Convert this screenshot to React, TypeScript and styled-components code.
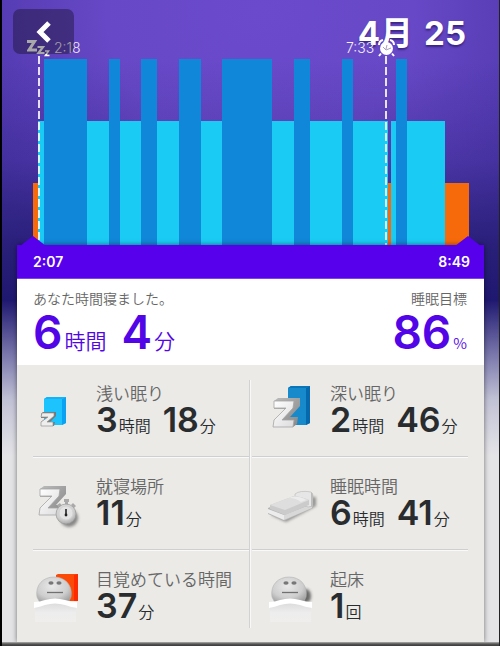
import React from "react";
import styled, { createGlobalStyle } from "styled-components";

const DIGITS = 'Inter, "Noto Sans CJK JP", sans-serif';
const KANJI = '"Noto Sans CJK JP", sans-serif';

const GlobalStyle = createGlobalStyle`
  *, *::before, *::after { box-sizing: border-box; }
  body { margin: 0; font-family: ${DIGITS}; background: #000; }
  h1, h2, p, dl, dt, dd { margin: 0; }
`;

const Page = styled.main`
  display: flex;
  flex-direction: column;
  min-height: 100vh;
  border-left: 2px solid #000;
  border-right: 1px solid #222;
  padding: 0 15px;
  background:
    linear-gradient(to bottom, rgba(26, 22, 100, 0) 60px, rgba(26, 22, 100, 0.2) 160px, rgba(26, 22, 100, 0.7) 250px, #1f1870 300px, #7a78ac 355px, #c2c2d6 400px, #e4e4e7 455px),
    radial-gradient(ellipse 440px 400px at 52% 10px, #6b4bcc 0%, #6748c6 35%, #4a34a8 75%);
`;

const Header = styled.header`
  display: flex;
  justify-content: space-between;
  align-items: flex-start;
  height: 59px;
  padding: 9px 18px 0 0;
`;

const BackButton = styled.button`
  position: relative;
  z-index: 2;
  display: flex;
  align-items: center;
  justify-content: center;
  width: 61px;
  height: 45px;
  margin-left: -4px;
  padding: 0;
  border: 0;
  border-radius: 7px;
  background: rgba(10, 6, 10, 0.35);
  cursor: pointer;
`;

const Title = styled.h1`
  display: flex;
  align-items: baseline;
  gap: 11px;
  font-size: 33px;
  line-height: 48px;
  font-weight: 700;
  color: #fff;
  text-shadow: 0 2px 2px rgba(30, 15, 90, 0.6);
`;

const Chart = styled.section`
  position: relative;
  height: 186px;
  margin: 0 15px 0 16px;
`;

const Bars = styled.svg`
  display: block;
  width: 100%;
  height: 100%;
`;

const Marker = styled.div<{ $at: number }>`
  position: absolute;
  left: ${(p) => p.$at}%;
  top: -3px;
  bottom: 0;
  width: 2px;
  background: repeating-linear-gradient(to bottom, rgba(255, 255, 255, 0.85) 0 8px, transparent 8px 11px);
`;

const MarkerLabel = styled.div<{ $side: "left" | "right" }>`
  position: absolute;
  bottom: 100%;
  ${(p) => (p.$side === "right" ? "left: -11px;" : "right: -8px;")}
  display: flex;
  align-items: center;
  gap: 4px;
  height: 18px;
  margin-bottom: -1px;
  font-size: 14px;
  line-height: 18px;
  font-weight: 300;
  color: #f3effc;
`;

const Card = styled.section`
  z-index: 1;
  display: flex;
  flex: 1;
  flex-direction: column;
  background: #ebeae7;
  box-shadow: 0 0 5px rgba(0, 0, 0, 0.5);
`;

const TimeBar = styled.div`
  position: relative;
  display: flex;
  justify-content: space-between;
  height: 34px;
  padding: 0 14px 0 16px;
  border-bottom: 1px solid #7a42f0;
  background: #5600eb;
  font-size: 14px;
  line-height: 33px;
  font-weight: 600;
  color: #fff;
`;

const Notch = styled.span<{ $side: "left" | "right" }>`
  position: absolute;
  bottom: 100%;
  ${(p) => (p.$side === "left" ? "left: 3px;" : "right: 3px;")}
  width: 26px;
  height: 10px;
  margin-bottom: -1px;
  background: #5600eb;
  clip-path: polygon(50% 0, 100% 100%, 0 100%);
`;

const Summary = styled.div`
  display: flex;
  justify-content: space-between;
  height: 86px;
  padding: 9px 17px 0 16px;
  background: #fff;
`;

const SummaryItem = styled.div<{ $end?: boolean }>`
  display: flex;
  flex-direction: column;
  align-items: ${(p) => (p.$end ? "flex-end" : "flex-start")};
`;

const SummaryLabel = styled.h2`
  font: 350 14px/20px ${KANJI};
  color: #666;
`;

const SummaryValue = styled.p`
  display: flex;
  align-items: baseline;
  gap: 2px;
  height: 48px;
  line-height: 48px;
  color: #5205e6;
`;

const SummaryNumber = styled.span`
  font-size: 46px;
  font-weight: 600;

  * + & { margin-left: 13px; }
`;

const SummaryUnit = styled.span<{ $small?: boolean }>`
  font-family: ${KANJI};
  font-size: ${(p) => (p.$small ? 15 : 21)}px;
  font-weight: 350;
`;

const Stats = styled.dl`
  position: relative;
  display: grid;
  grid-template-columns: 1fr 1fr;
  grid-template-rows: 93px 93px minmax(91px, 1fr);
  column-gap: 3px;
  flex: 1;
  padding: 0 16px;

  &::before {
    content: "";
    position: absolute;
    left: 50%;
    top: 15px;
    bottom: 14px;
    width: 2px;
    margin-left: -2px;
    background: linear-gradient(to right, #d3d2d2 50%, #f8f8f8 50%);
  }
`;

const Stat = styled.div`
  display: grid;
  grid-template-columns: 63px 1fr;
  grid-template-rows: 19px 36px;
  align-content: start;
  padding-top: 18px;
  background: linear-gradient(#d0cfd0, #d0cfd0) 0 91px / 100% 1px no-repeat,
    linear-gradient(#f9f9f9, #f9f9f9) 0 92px / 100% 1px no-repeat;

  &:nth-last-child(-n + 2) { background: none; }
  &:nth-child(even) { grid-template-columns: 78px 1fr; }
  &:nth-child(even) > svg { margin-left: 14px; }
`;

const StatIcon = styled.svg`
  grid-row: 1 / 3;
  width: 54px;
  height: 54px;
`;

const StatLabel = styled.dt`
  grid-column: 2;
  font: 350 17px/19px ${KANJI};
  color: #666;
  white-space: nowrap;
`;

const StatValue = styled.dd`
  grid-column: 2;
  display: flex;
  align-items: baseline;
  height: 36px;
  line-height: 36px;
  gap: 1px;
  color: #292c2e;
  white-space: nowrap;
`;

const StatNumber = styled.span`
  font-size: 34px;
  font-weight: 600;

  * + & { margin-left: 11px; }
`;

const StatUnit = styled.span`
  font-family: ${KANJI};
  font-size: 16px;
  font-weight: 350;
`;

const BottomEdge = styled.footer`
  z-index: 2;
  height: 4px;
  margin: 0 -15px;
  background: linear-gradient(#b0b0ae, #555 50%, #3a3a3a);
`;

const DEEP = "#1187d9";
const LIGHT = "#1acbf4";
const AWAKE = "#f66a0b";

type Bar = [start: number, end: number, top: number, color: string];
const bars: Bar[] = [
  [0, 5, 124, AWAKE],
  [5, 354, 62, LIGHT],
  [354, 357, 124, AWAKE],
  [357, 411, 62, LIGHT],
  [411, 435, 124, AWAKE],
  [11, 54, 0, DEEP],
  [76, 87, 0, DEEP],
  [108, 124, 0, DEEP],
  [146, 168, 0, DEEP],
  [189, 238, 0, DEEP],
  [260, 276, 0, DEEP],
  [308, 319, 0, DEEP],
  [362, 373, 0, DEEP],
];

function Gradients() {
  return (
    <defs>
      <linearGradient id="silver" x1="0" y1="0" x2="1" y2="1">
        <stop offset="0" stopColor="#fff" />
        <stop offset="1" stopColor="#dcdcde" />
      </linearGradient>
      <linearGradient id="side" x1="0" y1="0" x2="1" y2="1">
        <stop offset="0" stopColor="#bcbcbc" />
        <stop offset="1" stopColor="#858585" />
      </linearGradient>
      <radialGradient id="ball" cx="0.45" cy="0.35" r="0.75">
        <stop offset="0" stopColor="#e9e9e9" />
        <stop offset="0.6" stopColor="#cecece" />
        <stop offset="1" stopColor="#989898" />
      </radialGradient>
      <linearGradient id="sheet" x1="0" y1="0" x2="0" y2="1">
        <stop offset="0" stopColor="#dcdcdc" />
        <stop offset="0.5" stopColor="#ededed" />
        <stop offset="1" stopColor="#efeeec" />
      </linearGradient>
      <filter id="soft" x="-50%" y="-50%" width="200%" height="200%">
        <feGaussianBlur stdDeviation="1.6" />
      </filter>
    </defs>
  );
}

function LightSleepIcon() {
  return (
    <StatIcon viewBox="0 0 54 54" aria-hidden="true">
      <path d="M11 16l3-2h19v26l-4 2H11z" fill="#1cc3fc" />
      <path d="M29 16l4-2v26l-4 2z" fill="#0ba2f4" />
      <path d="M11 16l3-2h19l-4 2z" fill="#14b3f7" />
      <path d="M8 31l2-2h13v4l-6 6h5l-1 4H8v-4l5-4H8z" fill="#777" />
      <path d="M9 30h12v3l-7 6h6v4H8v-4l7-5H8z" fill="#eee" stroke="#929292" strokeWidth="0.7" />
    </StatIcon>
  );
}

function BigZ() {
  return (
    <>
      <path d="M1 18l4-3h22v8L17 34h8l-1 7-4 3H1l2-8 10-10H1z" fill="url(#side)" />
      <path d="M1 18h20l-1 7L9 37h12l-1 7H0l1-7 12-12H1z" fill="url(#silver)" stroke="#a5a5a5" strokeWidth="0.8" />
    </>
  );
}

function DeepSleepIcon() {
  return (
    <StatIcon viewBox="0 0 54 54" aria-hidden="true">
      <path d="M22 5l3-2h19v37l-4 2H22z" fill="#168acb" />
      <path d="M40 5l4-2v37l-4 2z" fill="#0769ad" />
      <path d="M22 5l3-2h19l-4 2z" fill="#0876b9" />
      <g transform="translate(7 0)"><BigZ /></g>
    </StatIcon>
  );
}

function TimeToSleepIcon() {
  return (
    <StatIcon viewBox="0 0 54 54" aria-hidden="true">
      <g transform="translate(6 -5)"><BigZ /></g>
      <circle cx="36" cy="42" r="9" fill="#666" opacity="0.75" filter="url(#soft)" />
      <path d="M31 23h5v3h-5zM32 25h3v5h-3zM24 29l3-2 2 3-3 2zM40 27l3 3-2 2-3-3z" fill="#aaa" />
      <circle cx="33" cy="38" r="10" fill="url(#ball)" stroke="#999" strokeWidth="0.7" />
      <circle cx="33" cy="37" r="7" fill="#e3e3e3" stroke="#ccc" strokeWidth="0.7" />
      <path d="M33 33v5" stroke="#222" strokeWidth="1.6" />
      <circle cx="33" cy="39" r="1.4" fill="#222" />
    </StatIcon>
  );
}

function BedIcon() {
  return (
    <StatIcon viewBox="0 0 54 54" aria-hidden="true">
      <path d="M5 39l36-18 9 0v9L20 46z" fill="#555" opacity="0.6" filter="url(#soft)" />
      <path d="M2 32l26-11 19 6v5L18 45 2 38z" fill="#b5b5b5" />
      <path d="M2 33l16 6v5L2 37z" fill="#ececec" />
      <path d="M18 39l28-11v4L18 44z" fill="#d8d8d8" />
      <path d="M29 25v-7q5-4 16-2 2 1 2 4v10l-5 1z" fill="#e6e6e6" stroke="#b5b5b5" strokeWidth="0.6" />
      <path d="M4 29l24-9q9 1 15 4v5L19 39 4 33z" fill="#cbcbcb" />
      <path d="M4 29l24-9q9 1 15 4L19 34z" fill="#dedede" />
      <path d="M26 21q8-1 14 3l-5 2q-5-4-12-4z" fill="#ececec" />
      <path d="M45 16q2 1 2 4v10l-2 1z" fill="#bdbdbd" />
    </StatIcon>
  );
}

function FaceIcon({ awake = false }: { awake?: boolean }) {
  return (
    <StatIcon viewBox={awake ? "0 0 54 54" : "-2 0 54 54"} aria-hidden="true">
      {awake && <path d="M23 6l2-1h20v27H23z" fill="#fb4908" />}
      {awake && <path d="M41 6l4-1v27h-4z" fill="#ff2b00" />}
      {!awake && <ellipse cx="38" cy="27" rx="5" ry="7" fill="#333" opacity="0.7" filter="url(#soft)" />}
      <path d="M4 28C2 16 10 8 21 8s19 8 17 20l-3 6H7z" fill="url(#ball)" stroke="#b5b5b5" strokeWidth="0.6" />
      <ellipse cx="18" cy="14" rx="2.600" ry="1.800" fill="#777" />
      <ellipse cx="26" cy="14" rx="2.600" ry="1.800" fill="#777" />
      <path d="M14 23.500h16" stroke="#707070" strokeWidth="1.300" />
      <path d="M2 38q20-8 41 0v15H2z" fill="url(#sheet)" />
      <path d="M1 33q6 0 11-2 10-3 20 0 6 2 12 2v6q-7-1-12-3-10-3-20 0-5 2-11 3z" fill="#fff" />
    </StatIcon>
  );
}

type Part = [value: string, unit: string];
const stats: { label: string; parts: Part[]; icon: React.ReactNode }[] = [
  { label: "浅い眠り", parts: [["3", "時間"], ["18", "分"]], icon: <LightSleepIcon /> },
  { label: "深い眠り", parts: [["2", "時間"], ["46", "分"]], icon: <DeepSleepIcon /> },
  { label: "就寝場所", parts: [["11", "分"]], icon: <TimeToSleepIcon /> },
  { label: "睡眠時間", parts: [["6", "時間"], ["41", "分"]], icon: <BedIcon /> },
  { label: "目覚めている時間", parts: [["37", "分"]], icon: <FaceIcon awake /> },
  { label: "起床", parts: [["1", "回"]], icon: <FaceIcon /> },
];

export default function App() {
  return (
    <Page lang="ja">
      <GlobalStyle />
      <Header>
        <BackButton type="button" aria-label="戻る">
          <svg width="18" height="24" viewBox="0 0 18 24" fill="none" stroke="#fff" strokeWidth="5" aria-hidden="true">
            <path d="M14 3L5 12l9 9" />
          </svg>
        </BackButton>
        <Title><span>4月</span><span>25</span></Title>
      </Header>

      <Chart aria-label="睡眠グラフ">
        <Bars viewBox="0 0 435 186" preserveAspectRatio="none" shapeRendering="crispEdges" aria-hidden="true">
          {bars.map(([start, end, top, color]) => (
            <rect key={start} x={start} y={top} width={end - start} height={186 - top} fill={color} />
          ))}
        </Bars>
        <Marker $at={1.15}>
          <MarkerLabel $side="right">
            <svg width="23" height="18" viewBox="0 0 23 18" fill="none" stroke="#fff" aria-hidden="true">
              <path d="M0 2.500h7.500L2 11h8" strokeWidth="3" />
              <path d="M10.500 8h5.500l-4.500 6h6" strokeWidth="2.200" />
              <path d="M18 12h3.500l-3 4.500h4" strokeWidth="1.600" />
            </svg>
            <time>2:18</time>
          </MarkerLabel>
        </Marker>
        <Marker $at={80.8}>
          <MarkerLabel $side="left">
            <time>7:33</time>
            <svg width="17" height="18" viewBox="0 0 17 18" aria-hidden="true">
              <circle cx="8.500" cy="9.500" r="6.500" fill="#fff" />
              <path d="M1 6q0-4 4-5M16 6q0-4-4-5M3 14.500l-2 2.500M14 14.500l2 2.500" stroke="#fff" strokeWidth="2" fill="none" />
              <path d="M5 8l3 3 5-2M9 6l-1 4" stroke="#aaa0bd" fill="none" />
            </svg>
          </MarkerLabel>
        </Marker>
      </Chart>

      <Card>
        <TimeBar>
          <Notch $side="left" />
          <time>2:07</time>
          <time>8:49</time>
          <Notch $side="right" />
        </TimeBar>
        <Summary>
          <SummaryItem>
            <SummaryLabel>あなた時間寝ました。</SummaryLabel>
            <SummaryValue>
              <SummaryNumber>6</SummaryNumber>
              <SummaryUnit>時間</SummaryUnit>
              <SummaryNumber>4</SummaryNumber>
              <SummaryUnit>分</SummaryUnit>
            </SummaryValue>
          </SummaryItem>
          <SummaryItem $end>
            <SummaryLabel>睡眠目標</SummaryLabel>
            <SummaryValue>
              <SummaryNumber>86</SummaryNumber>
              <SummaryUnit $small>%</SummaryUnit>
            </SummaryValue>
          </SummaryItem>
        </Summary>
        <svg width="0" height="0" aria-hidden="true">
          <Gradients />
        </svg>
        <Stats>
          {stats.map(({ label, parts, icon }) => (
            <Stat key={label}>
              {icon}
              <StatLabel>{label}</StatLabel>
              <StatValue>
                {parts.map(([value, unit]) => (
                  <React.Fragment key={unit}>
                    <StatNumber>{value}</StatNumber>
                    <StatUnit>{unit}</StatUnit>
                  </React.Fragment>
                ))}
              </StatValue>
            </Stat>
          ))}
        </Stats>
      </Card>
      <BottomEdge />
    </Page>
  );
}
